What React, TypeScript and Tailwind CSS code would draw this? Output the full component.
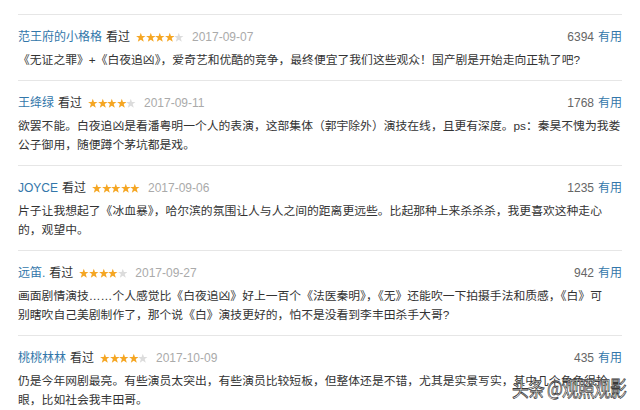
type Review = {
  name: string
  stars: number
  date: string
  votes: string
  lines: string[]
}

const REVIEWS: Review[] = [
  {
    name: '范王府的小格格',
    stars: 4,
    date: '2017-09-07',
    votes: '6394',
    lines: ['《无证之罪》+《白夜追凶》，爱奇艺和优酷的竞争，最终便宜了我们这些观众！国产剧是开始走向正轨了吧?'],
  },
  {
    name: '王绛绿',
    stars: 4,
    date: '2017-09-11',
    votes: '1768',
    lines: [
      '欲罢不能。白夜追凶是看潘粤明一个人的表演，这部集体（郭宇除外）演技在线，且更有深度。ps：秦昊不愧为我娄',
      '公子御用，随便蹲个茅坑都是戏。',
    ],
  },
  {
    name: 'JOYCE',
    stars: 5,
    date: '2017-09-06',
    votes: '1235',
    lines: [
      '片子让我想起了《冰血暴》，哈尔滨的氛围让人与人之间的距离更远些。比起那种上来杀杀杀，我更喜欢这种走心',
      '的，观望中。',
    ],
  },
  {
    name: '远笛.',
    stars: 4,
    date: '2017-09-27',
    votes: '942',
    lines: [
      '画面剧情演技……个人感觉比《白夜追凶》好上一百个《法医秦明》，《无》还能吹一下拍摄手法和质感，《白》可',
      '别瞎吹自己美剧制作了，那个说《白》演技更好的，怕不是没看到李丰田杀手大哥?',
    ],
  },
  {
    name: '桃桃林林',
    stars: 4,
    date: '2017-10-09',
    votes: '435',
    lines: [
      '仍是今年网剧最亮。有些演员太突出，有些演员比较短板，但整体还是不错，尤其是实景写实，其中几个角色很抢',
      '眼，比如社会我丰田哥。',
    ],
  },
]

function Star({ on }: { on: boolean }) {
  return (
    <svg viewBox="0 0 10 10" className="h-[10.5px] w-[9.6px]">
      <polygon
        points="5,0.2 6.2,3.6 9.9,3.7 7,5.9 8.1,9.7 5,7.5 1.9,9.7 3,5.9 0.1,3.7 3.8,3.6"
        fill={on ? '#f5a623' : '#dcdcdc'}
      />
    </svg>
  )
}

function Stars({ count }: { count: number }) {
  return (
    <span className="ml-[6px] mr-[8px] inline-flex items-center">
      {[0, 1, 2, 3, 4].map((i) => (
        <Star key={i} on={i < count} />
      ))}
    </span>
  )
}

export default function App() {
  return (
    <div className="relative h-[410px] w-[640px] overflow-hidden bg-white font-['Liberation_Sans','Noto_Sans_CJK_SC',sans-serif] text-[12px]">
      <div className="pl-[18px] pr-[18px] pt-[14px]">
        {REVIEWS.map((r) => (
          <div key={r.name} className="border-t border-[#e6e6e6] pt-[12px] pb-[10px]">
            <div className="mb-[4px] flex h-[20px] items-center justify-between">
              <div className="flex items-center">
                <span className="text-[#3377aa]">{r.name}</span>
                <span className="ml-[4px] text-[#333]">看过</span>
                <Stars count={r.stars} />
                <span className="text-[#aaa]">{r.date}</span>
              </div>
              <div className="flex items-center">
                <span className="text-[#666]">{r.votes}</span>
                <span className="ml-[4px] text-[#3377aa]">有用</span>
              </div>
            </div>
            <div className="text-[11.8px] leading-[19px] text-[#333]">
              {r.lines.map((l, i) => (
                <div key={i} className="whitespace-nowrap">
                  {l}
                </div>
              ))}
            </div>
          </div>
        ))}
      </div>

      {/* watermark */}
      <div className="absolute left-[512px] top-[375px] origin-left scale-x-[0.8] whitespace-nowrap font-['Noto_Sans_CJK_SC',sans-serif] text-[21px] leading-[24px] tracking-[-1px] text-white [-webkit-text-stroke:0.8px_#3a3a3a]">
        头条 @观照观影
      </div>
    </div>
  )
}
